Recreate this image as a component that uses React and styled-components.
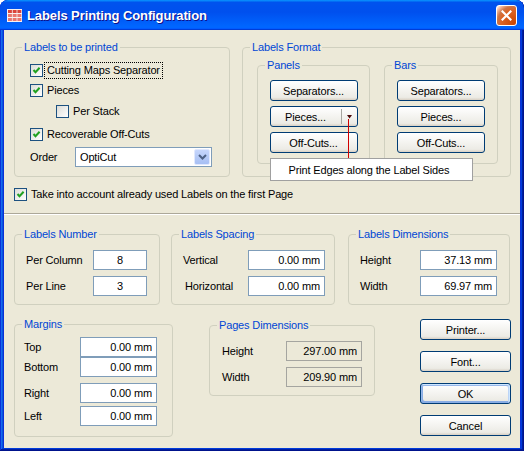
import React from 'react'
import styled, { createGlobalStyle, css } from 'styled-components'

const GlobalStyle = createGlobalStyle`
  html, body { margin:0; padding:0; background:#ffffff; }
  body { font-family:"Liberation Sans", Arial, sans-serif; font-size:11px; letter-spacing:-0.15px; color:#000; }
  * { box-sizing:border-box; }
`

const Window = styled.div`
  position:relative;
  width:524px;
  height:451px;
  display:flex;
  flex-direction:column;
  background:#0831d9;
  border-radius:8px 8px 0 0;
  overflow:hidden;
  box-shadow: inset -1px -1px #00138c, inset 1px 1px #0831d9, inset -2px -2px #001ea0,
    inset 2px 2px #166aee, inset -3px -3px #003bda, inset 3px 3px #0855dd;
`

const TitleBar = styled.div`
  height:30px;
  flex-shrink:0;
  display:flex;
  align-items:center;
  padding:0 7px 0 7px;
  background:linear-gradient(180deg,#0997ff,#0053ee 8%,#0050ee 40%,#0066ff 88%,#0066ff 93%,#005bff 95%,#003dd7 96%,#003dd7);
  border-radius:8px 8px 0 0;
`

const Title = styled.span`
  flex:1;
  margin-left:5px;
  color:#fff;
  font-family:"Liberation Sans", Arial, sans-serif;
  font-weight:bold;
  font-size:13px;
  letter-spacing:-0.1px;
  text-shadow:1px 1px #0f1089;
`

const CloseBtn = styled.div`
  width:21px;
  height:21px;
  border:1px solid #fff;
  border-radius:3px;
  background:radial-gradient(circle at 90% 90%,#cc4600 0%,#dc6527 55%,#cd7546 70%,#ffccb2 90%,#fff 100%);
  display:flex;
  align-items:center;
  justify-content:center;
  margin-top:1px;
`

const Client = styled.div`
  flex:1;
  margin:0 4px 3px 4px;
  background:#ece9d8;
  padding:17px 10px 0 10px;
  display:flex;
  flex-direction:column;
`

const Row = styled.div`
  display:flex;
  align-items:flex-start;
  gap:${p => p.$gap || 0}px;
  margin-top:${p => p.$mt || 0}px;
`

const Group = styled.div`
  width:${p => p.$w}px;
  height:${p => p.$h}px;
  flex-shrink:0;
  margin-top:${p => p.$mt || 0}px;
  margin-left:${p => p.$ml || 0}px;
  border:1px solid #d0d0bf;
  border-radius:4px;
  display:flex;
  flex-direction:column;
`

const Legend = styled.span`
  align-self:flex-start;
  margin:-7px 0 0 7px;
  padding:0 2px;
  height:13px;
  line-height:13px;
  background:#ece9d8;
  color:#0046d5;
  white-space:nowrap;
`

const GroupBody = styled.div`
  display:flex;
  flex-direction:${p => p.$row ? 'row' : 'column'};
  align-items:flex-start;
  gap:${p => p.$gap || 0}px;
  padding-left:${p => p.$pl || 0}px;
`

const CheckRow = styled.div`
  display:flex;
  align-items:center;
  height:13px;
  margin-top:${p => p.$mt || 0}px;
  margin-left:${p => p.$indent || 0}px;
`

const Box = styled.span`
  width:13px;
  height:13px;
  flex-shrink:0;
  border:1px solid #1c5180;
  background:linear-gradient(135deg,#dcdcd7,#ffffff);
  display:flex;
  align-items:center;
  justify-content:center;
`

const CheckText = styled.span`
  margin-left:3px;
  padding:0 1px;
  line-height:13px;
  white-space:nowrap;
  ${p => p.$focus && css`
    outline:1px dotted #000;
    outline-offset:1px;
  `}
`

const ComboRow = styled.div`
  display:flex;
  align-items:center;
  margin-top:6px;
`

const ComboLabel = styled.span`
  width:45px;
`

const Combo = styled.div`
  width:137px;
  height:20px;
  border:1px solid #7f9db9;
  background:#fff;
  padding:1px;
  display:flex;
  align-items:center;
`

const ComboText = styled.span`
  flex:1;
  padding-left:3px;
`

const ComboButton = styled.span`
  width:16px;
  height:16px;
  border:1px solid #e0e8fe;
  border-radius:2px;
  background:linear-gradient(180deg,#c6d6fc,#b4c9f6 55%,#a7bff4);
  display:flex;
  align-items:center;
  justify-content:center;
`

const SubColumn = styled.div`
  display:flex;
  flex-direction:column;
  align-items:center;
  gap:5px;
  margin-top:8px;
`

const Button = styled.button`
  width:${p => p.$w}px;
  height:21px;
  padding:0;
  border:1px solid #003c74;
  border-radius:3px;
  background:linear-gradient(180deg,#ffffff,#ecebe5 86%,#d8d0c4);
  font-family:"Liberation Sans", Arial, sans-serif;
  font-size:11px;
  letter-spacing:-0.15px;
  color:#000;
  display:flex;
  align-items:center;
  justify-content:center;
  ${p => p.$default && css`
    box-shadow: inset -1px 1px #cee7ff, inset 1px 2px #98b8ea, inset -2px 2px #bcd4f6,
      inset 1px -1px #89ade4, inset 2px -2px #89ade4;
  `}
`

const SplitMain = styled.span`
  width:70px;
  text-align:center;
`

const SplitDivider = styled.span`
  width:1px;
  height:15px;
  background:#a7a6a0;
`

const SplitArrow = styled.span`
  flex:1;
  display:flex;
  justify-content:center;
`

const SplitWrap = styled.div`
  position:relative;
`

const Pointer = styled.div`
  position:absolute;
  left:78px;
  top:13px;
  width:1px;
  height:39px;
  background:#d10000;
  z-index:2;
`

const Callout = styled.div`
  position:absolute;
  left:0;
  top:52px;
  width:203px;
  height:23px;
  background:#fff;
  border:1px solid #a0a0a0;
  padding-left:18px;
  display:flex;
  align-items:center;
  white-space:nowrap;
  z-index:2;
`

const Separator = styled.div`
  margin:12px -10px 0 -10px;
  height:2px;
  border-top:1px solid #aca899;
  border-bottom:1px solid #ffffff;
`

const FieldRow = styled.div`
  display:flex;
  align-items:center;
  height:20px;
  margin-top:${p => p.$mt || 0}px;
`

const FieldLabel = styled.span`
  width:${p => p.$w}px;
  padding-left:${p => p.$indent || 0}px;
  flex-shrink:0;
  white-space:nowrap;
`

const Field = styled.input`
  width:${p => p.$w}px;
  height:20px;
  margin:0;
  padding:0 ${p => p.$center ? 0 : 4}px 0 0;
  border:1px solid ${p => p.$ro ? '#a5a5a0' : '#7f9db9'};
  background:${p => p.$ro ? '#ece9d8' : '#ffffff'};
  text-align:${p => p.$center ? 'center' : 'right'};
  font-family:"Liberation Sans", Arial, sans-serif;
  font-size:11px;
  letter-spacing:-0.15px;
  color:#000;
  outline:none;
`

const ButtonColumn = styled.div`
  display:flex;
  flex-direction:column;
  gap:11px;
  margin-left:45px;
`

const CheckMark = () => (
  <svg width="9" height="9" viewBox="0 0 9 9">
    <path d="M1.5 4 L3.5 6.2 L7.6 1.8" fill="none" stroke="#21a121" strokeWidth="2" />
  </svg>
)

const Check = ({ checked, label, focus, mt, indent }) => (
  <CheckRow $mt={mt} $indent={indent}>
    <Box>{checked && <CheckMark />}</Box>
    <CheckText $focus={focus}>{label}</CheckText>
  </CheckRow>
)

const AppIcon = () => (
  <svg width="15" height="13" viewBox="0 0 15 13">
    <rect x="0" y="0" width="15" height="13" fill="#f7f1f1" />
    {[0, 1, 2].map(r =>
      [0, 1, 2].map(c => (
        <rect key={r + '-' + c} x={1 + c * 4.7} y={1 + r * 4} width="3.9" height="3"
          fill={r === 0 ? '#d9443b' : '#e9776f'} />
      ))
    )}
  </svg>
)

const CloseIcon = () => (
  <svg width="11" height="11" viewBox="0 0 11 11">
    <path d="M1.5 1.5 L9.5 9.5 M9.5 1.5 L1.5 9.5" stroke="#fff" strokeWidth="2.2" strokeLinecap="square" />
  </svg>
)

const Chevron = () => (
  <svg width="9" height="6" viewBox="0 0 9 6">
    <path d="M1 1 L4.5 4.5 L8 1" fill="none" stroke="#4d6185" strokeWidth="2" />
  </svg>
)

const Arrow = () => (
  <svg width="5" height="4" viewBox="0 0 5 4">
    <path d="M0 0 H5 L2.5 3.5 Z" fill="#4a0a0a" />
  </svg>
)

const NumberRow = ({ label, value, lw, fw, mt, indent, center, ro }) => (
  <FieldRow $mt={mt}>
    <FieldLabel $w={lw} $indent={indent}>{label}</FieldLabel>
    <Field $w={fw} $center={center} $ro={ro} readOnly value={value} />
  </FieldRow>
)

export default function App() {
  return (
    <>
      <GlobalStyle />
      <Window>
        <TitleBar>
          <AppIcon />
          <Title>Labels Printing Configuration</Title>
          <CloseBtn><CloseIcon /></CloseBtn>
        </TitleBar>
        <Client>
          <Row $gap={12}>
            <Group $w={216} $h={130}>
              <Legend>Labels to be printed</Legend>
              <GroupBody $pl={15}>
                <Check checked focus label="Cutting Maps Separator" mt={10} />
                <Check checked label="Pieces" mt={7} />
                <Check label="Per Stack" mt={8} indent={26} />
                <Check checked label="Recoverable Off-Cuts" mt={10} />
                <ComboRow>
                  <ComboLabel>Order</ComboLabel>
                  <Combo>
                    <ComboText>OptiCut</ComboText>
                    <ComboButton><Chevron /></ComboButton>
                  </Combo>
                </ComboRow>
              </GroupBody>
            </Group>
            <Group $w={269} $h={130}>
              <Legend>Labels Format</Legend>
              <GroupBody $row $pl={14} $gap={14}>
                <Group $w={113} $h={99} $mt={11}>
                  <Legend>Panels</Legend>
                  <SubColumn>
                    <Button $w={88}>Separators...</Button>
                    <SplitWrap>
                      <Button $w={88}>
                        <SplitMain>Pieces...</SplitMain>
                        <SplitDivider />
                        <SplitArrow><Arrow /></SplitArrow>
                      </Button>
                      <Pointer />
                      <Callout>Print Edges along the Label Sides</Callout>
                    </SplitWrap>
                    <Button $w={88}>Off-Cuts...</Button>
                  </SubColumn>
                </Group>
                <Group $w={114} $h={99} $mt={11}>
                  <Legend>Bars</Legend>
                  <SubColumn>
                    <Button $w={88}>Separators...</Button>
                    <Button $w={88}>Pieces...</Button>
                    <Button $w={88}>Off-Cuts...</Button>
                  </SubColumn>
                </Group>
              </GroupBody>
            </Group>
          </Row>

          <Check checked label="Take into account already used Labels on the first Page" mt={11} />
          <Separator />

          <Row $mt={19}>
            <Group $w={146} $h={71}>
              <Legend>Labels Number</Legend>
              <GroupBody $pl={11}>
                <NumberRow label="Per Column" value="8" lw={67} fw={54} mt={9} center />
                <NumberRow label="Per Line" value="3" lw={67} fw={54} mt={6} center />
              </GroupBody>
            </Group>
            <Group $w={164} $h={71} $ml={11}>
              <Legend>Labels Spacing</Legend>
              <GroupBody $pl={11}>
                <NumberRow label="Vertical" value="0.00 mm" lw={65} fw={77} mt={9} />
                <NumberRow label="Horizontal" value="0.00 mm" lw={65} fw={77} mt={6} indent={2} />
              </GroupBody>
            </Group>
            <Group $w={162} $h={71} $ml={13}>
              <Legend>Labels Dimensions</Legend>
              <GroupBody $pl={11}>
                <NumberRow label="Height" value="37.13 mm" lw={60} fw={77} mt={9} />
                <NumberRow label="Width" value="69.97 mm" lw={60} fw={77} mt={6} />
              </GroupBody>
            </Group>
          </Row>

          <Row $mt={14}>
            <Group $w={159} $h={113} $mt={5}>
              <Legend>Margins</Legend>
              <GroupBody $pl={9}>
                <NumberRow label="Top" value="0.00 mm" lw={56} fw={77} mt={6} />
                <NumberRow label="Bottom" value="0.00 mm" lw={56} fw={77} mt={0} />
                <NumberRow label="Right" value="0.00 mm" lw={56} fw={77} mt={6} />
                <NumberRow label="Left" value="0.00 mm" lw={56} fw={77} mt={3} />
              </GroupBody>
            </Group>
            <Group $w={166} $h={71} $mt={6} $ml={36}>
              <Legend>Pages Dimensions</Legend>
              <GroupBody $pl={12}>
                <NumberRow label="Height" value="297.00 mm" lw={64} fw={76} mt={9} ro />
                <NumberRow label="Width" value="209.90 mm" lw={64} fw={76} mt={6} ro />
              </GroupBody>
            </Group>
            <ButtonColumn>
              <Button $w={91}>Printer...</Button>
              <Button $w={91}>Font...</Button>
              <Button $w={91} $default>OK</Button>
              <Button $w={91}>Cancel</Button>
            </ButtonColumn>
          </Row>
        </Client>
      </Window>
    </>
  )
}
